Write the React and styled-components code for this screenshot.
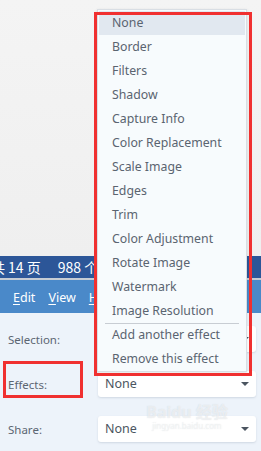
import React from 'react';
import styled, { createGlobalStyle } from 'styled-components';

const GlobalStyle = createGlobalStyle`
  html, body {
    margin: 0;
    padding: 0;
    width: 261px;
    height: 451px;
    overflow: hidden;
    background: #f3f3f3;
  }
  * { box-sizing: border-box; }
`;

const effects = [
  'None', 'Border', 'Filters', 'Shadow', 'Capture Info', 'Color Replacement',
  'Scale Image', 'Edges', 'Trim', 'Color Adjustment', 'Rotate Image',
  'Watermark', 'Image Resolution',
];

export default function App() {
  return (
    <>
      <GlobalStyle />
      <Page>
        <Backdrop />
        <StatusBar>
          <span className="cut">共</span>
          <span>14 页</span>
          <span className="gap">988 个字</span>
        </StatusBar>
        <Divider />
        <MenuBar>
          <MenuItem><u>E</u>dit</MenuItem>
          <MenuItem><u>V</u>iew</MenuItem>
          <MenuItem><u>H</u>elp</MenuItem>
        </MenuBar>
        <Form>
          <Row>
            <Label>Selection:</Label>
            <Select><Arrow /></Select>
          </Row>
          <Row>
            <Label>Effects:</Label>
            <Select>None<Arrow /></Select>
          </Row>
          <Row>
            <Label>Share:</Label>
            <Select>None<Arrow /></Select>
          </Row>
          <Watermark>
            <div className="big">Baidu 经验</div>
            <div className="small">jingyan.baidu.com</div>
          </Watermark>
        </Form>

        <Dropdown>
          {effects.map((e, i) => (
            <Option key={e} $active={i === 0}>{e}</Option>
          ))}
          <Separator />
          <Option>Add another effect</Option>
          <Option>Remove this effect</Option>
        </Dropdown>

        <Mark $x={94} $y={12} $w={158} $h={364} />
        <Mark $x={3} $y={361} $w={80} $h={37} />
      </Page>
    </>
  );
}

const Page = styled.div`
  position: relative;
  width: 261px;
  height: 451px;
  display: flex;
  flex-direction: column;
  font-family: "Noto Sans", "Noto Sans CJK SC", sans-serif;
`;

const Backdrop = styled.div`
  height: 256px;
  background: linear-gradient(#f4f4f4, #efefef);
`;

const StatusBar = styled.div`
  height: 22px;
  background: #2c5698;
  color: #fff;
  font-family: "Noto Sans CJK SC", sans-serif;
  font-size: 14px;
  line-height: 22px;
  white-space: nowrap;
  display: flex;
  gap: 3px;
  .cut { margin-left: -9px; }
  .gap { margin-left: 14px; }
`;

const Divider = styled.div`
  height: 2px;
  background: #c6ccd4;
`;

const MenuBar = styled.div`
  height: 33px;
  background: #4a89c9;
  display: flex;
  align-items: center;
  gap: 13px;
  padding: 2px 0 0 13px;
  white-space: nowrap;
  overflow: hidden;
`;

const MenuItem = styled.span`
  color: #fff;
  font-size: 12.5px;
  u { text-underline-offset: 2px; }
`;

const Form = styled.div`
  position: relative;
  flex: 1;
  background: #edf3fa;
  padding: 13px 5px 0 8px;
  display: flex;
  flex-direction: column;
  gap: 19px;
`;

const Row = styled.div`
  display: flex;
  align-items: center;
  justify-content: space-between;
`;

const Label = styled.span`
  font-size: 11.5px;
  color: #5c6672;
`;

const Select = styled.div`
  position: relative;
  width: 158px;
  height: 26px;
  background: #fff;
  border-radius: 3px;
  box-shadow: 0 1px 2px rgba(120, 140, 160, 0.25);
  padding-left: 7px;
  font-size: 12.5px;
  line-height: 26px;
  color: #4b5560;
`;

const Arrow = styled.span`
  position: absolute;
  right: 7px;
  top: 11px;
  border-left: 4px solid transparent;
  border-right: 4px solid transparent;
  border-top: 4px solid #4b5560;
`;

const Watermark = styled.div`
  position: absolute;
  left: 146px;
  top: 90px;
  color: rgba(255, 255, 255, 0.55);
  text-shadow: 0 0 1px rgba(150, 160, 170, 0.35);
  text-align: center;
  pointer-events: none;
  .big { font-size: 16px; font-weight: 700; line-height: 18px; }
  .small { font-size: 8px; line-height: 9px; }
`;

const Dropdown = styled.div`
  position: absolute;
  left: 97px;
  top: 9px;
  width: 150px;
  height: 363px;
  background: #f7fbfd;
  border: 1px solid #d9dee4;
  box-shadow: 0 1px 3px rgba(0, 0, 0, 0.12);
  padding: 1px 1px 0 1px;
`;

const Option = styled.div`
  height: 24px;
  line-height: 24px;
  padding-left: 13px;
  font-size: 12.3px;
  color: #5a6470;
  white-space: nowrap;
  background: ${p => (p.$active ? '#e1e8f0' : 'transparent')};
`;

const Separator = styled.div`
  height: 1px;
  margin: 0 6px -1px 6px;
  background: #c8cdd3;
`;

const Mark = styled.div`
  position: absolute;
  left: ${p => p.$x}px;
  top: ${p => p.$y}px;
  width: ${p => p.$w}px;
  height: ${p => p.$h}px;
  border: 3px solid #f03030;
  pointer-events: none;
`;
